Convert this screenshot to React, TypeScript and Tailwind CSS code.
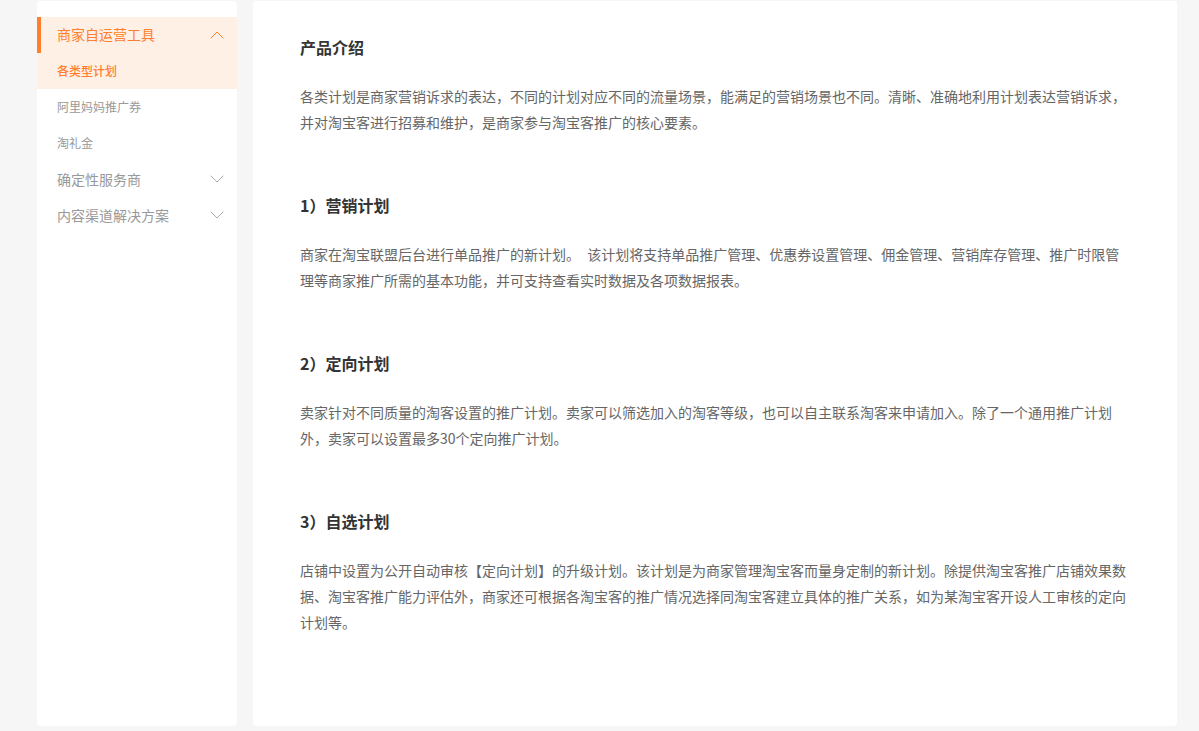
import { ChevronDown, ChevronUp } from "lucide-react";

const sections = [
  {
    title: "1）营销计划",
    text: "商家在淘宝联盟后台进行单品推广的新计划。 该计划将支持单品推广管理、优惠券设置管理、佣金管理、营销库存管理、推广时限管理等商家推广所需的基本功能，并可支持查看实时数据及各项数据报表。",
  },
  {
    title: "2）定向计划",
    text: "卖家针对不同质量的淘客设置的推广计划。卖家可以筛选加入的淘客等级，也可以自主联系淘客来申请加入。除了一个通用推广计划外，卖家可以设置最多30个定向推广计划。",
  },
  {
    title: "3）自选计划",
    text: "店铺中设置为公开自动审核【定向计划】的升级计划。该计划是为商家管理淘宝客而量身定制的新计划。除提供淘宝客推广店铺效果数据、淘宝客推广能力评估外，商家还可根据各淘宝客的推广情况选择同淘宝客建立具体的推广关系，如为某淘宝客开设人工审核的定向计划等。",
  },
];

function Sidebar() {
  return (
    <aside className="w-[200px] h-[725px] bg-white rounded pt-4 shrink-0">
      <div className="bg-[#fff0e5]">
        <div className="relative h-9 flex items-center justify-between pl-5 pr-2 pb-px text-[14px] text-[#ff7f2d]">
          <span className="absolute left-0 top-0 h-9 w-1 bg-[#ff7f2d]" />
          <span>商家自运营工具</span>
          <ChevronUp size={24} strokeWidth={1} />
        </div>
        <div className="h-9 flex items-center pl-5 text-[12px] font-medium text-[#ff7f2d]">各类型计划</div>
      </div>
      <div className="h-9 flex items-center pl-5 text-[12px] text-[#999]">阿里妈妈推广券</div>
      <div className="h-9 flex items-center pl-5 text-[12px] text-[#999]">淘礼金</div>
      <div className="h-9 flex items-center justify-between pl-5 pr-2 text-[14px] text-[#999]">
        <span>确定性服务商</span>
        <ChevronDown size={24} strokeWidth={1} className="text-[#aaa]" />
      </div>
      <div className="h-9 flex items-center justify-between pl-5 pr-2 text-[14px] text-[#999]">
        <span>内容渠道解决方案</span>
        <ChevronDown size={24} strokeWidth={1} className="text-[#aaa]" />
      </div>
    </aside>
  );
}

export default function App() {
  return (
    <div
      className="min-h-[731px] bg-[#f6f6f6] pt-px pl-[37px] flex gap-4"
      style={{ fontFamily: '"Noto Sans CJK SC", "Noto Sans", sans-serif' }}
    >
      <Sidebar />
      <main className="w-[924px] h-[725px] bg-white rounded pl-[47px] pr-[49px] pt-[34px]">
        <h2 className="text-[16px] leading-6 font-bold text-[#333]">产品介绍</h2>
        <p className="mt-6 text-[14px] leading-[26px] text-[#666]">
          各类计划是商家营销诉求的表达，不同的计划对应不同的流量场景，能满足的营销场景也不同。清晰、准确地利用计划表达营销诉求，并对淘宝客进行招募和维护，是商家参与淘宝客推广的核心要素。
        </p>
        {sections.map((s) => (
          <section key={s.title} className="mt-[58px]">
            <h3 className="text-[16px] leading-6 font-bold text-[#333]">{s.title}</h3>
            <p className="mt-6 text-[14px] leading-[26px] text-[#666] [word-spacing:4px]">{s.text}</p>
          </section>
        ))}
      </main>
    </div>
  );
}
